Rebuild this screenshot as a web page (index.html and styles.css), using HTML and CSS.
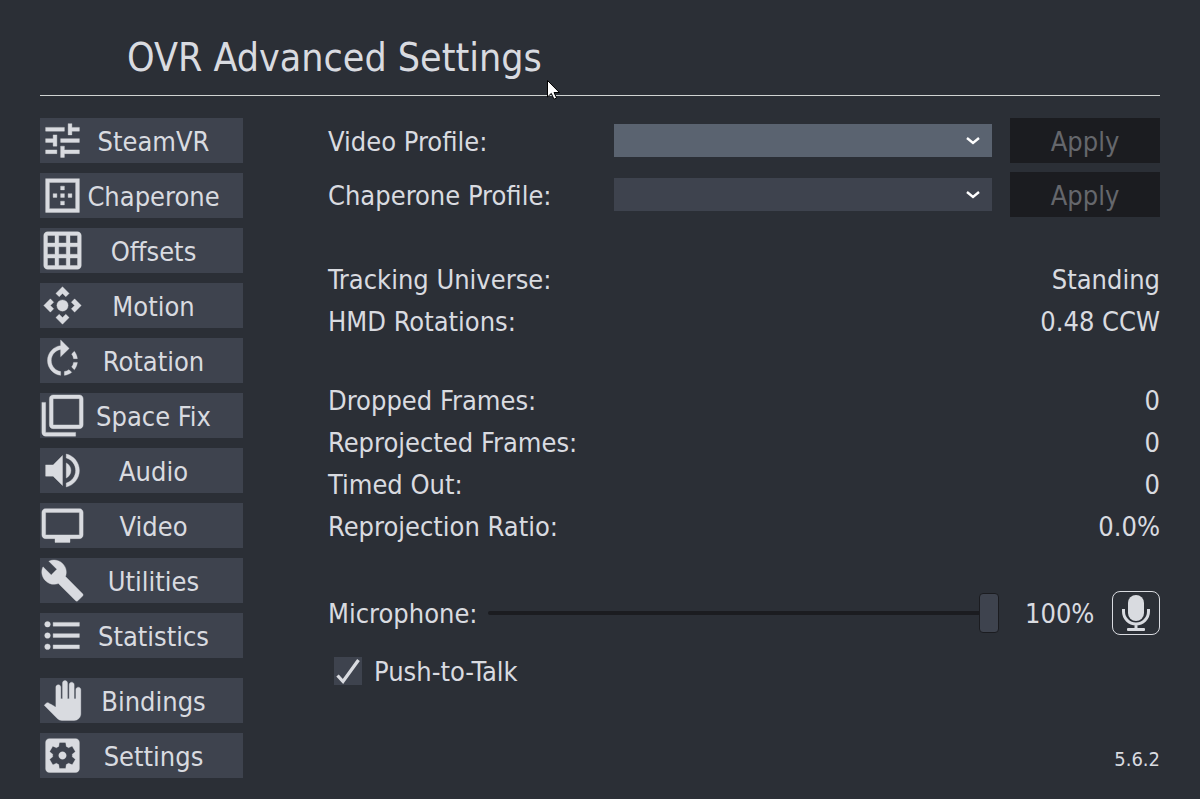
FILE: index.html
```html
<!DOCTYPE html>
<html lang="en">
<head>
<meta charset="utf-8">
<title>OVR Advanced Settings</title>
<link rel="stylesheet" href="styles.css">
</head>
<body>
<div class="page">
  <header class="header">
    <h1 class="title">OVR Advanced Settings</h1>
  </header>
  <div class="body">
    <nav class="nav" aria-label="Sections">
      <button class="nav-button" type="button"><svg class="icon" viewBox="0 0 24 24" aria-hidden="true"><path d="M3 17v2h6v-2H3zM3 5v2h10V5H3zm10 16v-2h8v-2h-8v-2h-2v6h2zM7 9v2H3v2h4v2h2V9H7zm14 4v-2H11v2h10zm-6-4h2V7h4V5h-4V3h-2v6z"/></svg><span class="nav-label">SteamVR</span></button>
      <button class="nav-button" type="button"><svg class="icon" viewBox="0 0 24 24" aria-hidden="true"><path d="M13 7h-2v2h2V7zm0 4h-2v2h2v-2zm4 0h-2v2h2v-2zM3 3v18h18V3H3zm16 16H5V5h14v14zm-6-4h-2v2h2v-2zm-4-4H7v2h2v-2z"/></svg><span class="nav-label">Chaperone</span></button>
      <button class="nav-button" type="button"><svg class="icon" viewBox="0 0 24 24" aria-hidden="true"><path d="M20 2H4c-1.1 0-2 .9-2 2v16c0 1.1.9 2 2 2h16c1.1 0 2-.9 2-2V4c0-1.1-.9-2-2-2zM8 20H4v-4h4v4zm0-6H4v-4h4v4zm0-6H4V4h4v4zm6 12h-4v-4h4v4zm0-6h-4v-4h4v4zm0-6h-4V4h4v4zm6 12h-4v-4h4v4zm0-6h-4v-4h4v4zm0-6h-4V4h4v4z"/></svg><span class="nav-label">Offsets</span></button>
      <button class="nav-button" type="button"><svg class="icon" viewBox="0 0 24 24" aria-hidden="true"><path d="M15.54 5.54L13.77 7.3 12 5.54 10.23 7.3 8.46 5.54 12 2zm2.92 10l-1.76-1.77L18.46 12l-1.76-1.77 1.76-1.77L22 12zm-10 2.92l1.77-1.76L12 18.46l1.77-1.76 1.77 1.76L12 22zm-2.92-10l1.76 1.77L5.54 12l1.76 1.77-1.76 1.77L2 12z"/><circle cx="12" cy="12" r="3"/></svg><span class="nav-label">Motion</span></button>
      <button class="nav-button" type="button"><svg class="icon" viewBox="0 0 24 24" aria-hidden="true"><path d="M15.55 5.55L11 1v3.07C7.06 4.56 4 7.92 4 12s3.05 7.44 7 7.93v-2.02c-2.84-.48-5-2.94-5-5.91s2.16-5.43 5-5.91V10l4.55-4.45zM19.93 11c-.17-1.39-.72-2.73-1.62-3.89l-1.42 1.42c.54.75.88 1.6 1.02 2.47h2.02zM13 17.9v2.02c1.39-.17 2.74-.71 3.9-1.61l-1.44-1.44c-.75.54-1.59.89-2.46 1.03zm3.89-2.42l1.42 1.41c.9-1.16 1.45-2.5 1.62-3.89h-2.02c-.14.87-.48 1.72-1.02 2.48z"/></svg><span class="nav-label">Rotation</span></button>
      <button class="nav-button" type="button"><svg class="icon" viewBox="0 0 24 24" aria-hidden="true"><path d="M3 5H1v16c0 1.1.9 2 2 2h16v-2H3V5zm18-4H7c-1.1 0-2 .9-2 2v14c0 1.1.9 2 2 2h14c1.1 0 2-.9 2-2V3c0-1.1-.9-2-2-2zm0 16H7V3h14v14z"/></svg><span class="nav-label">Space Fix</span></button>
      <button class="nav-button" type="button"><svg class="icon" viewBox="0 0 24 24" aria-hidden="true"><path d="M3 9v6h4l5 5V4L7 9H3zm13.5 3c0-1.77-1.02-3.29-2.5-4.03v8.05c1.48-.73 2.5-2.25 2.5-4.02zM14 3.23v2.06c2.89.86 5 3.54 5 6.71s-2.11 5.85-5 6.71v2.06c4.01-.91 7-4.49 7-8.77s-2.99-7.86-7-8.77z"/></svg><span class="nav-label">Audio</span></button>
      <button class="nav-button" type="button"><svg class="icon" viewBox="0 0 24 24" aria-hidden="true"><path d="M21 3H3c-1.1 0-2 .9-2 2v12c0 1.1.9 2 2 2h5v2h8v-2h5c1.1 0 1.99-.9 1.99-2L23 5c0-1.1-.9-2-2-2zm0 14H3V5h18v12z"/></svg><span class="nav-label">Video</span></button>
      <button class="nav-button" type="button"><svg class="icon" viewBox="0 0 24 24" aria-hidden="true"><path d="M22.7 19l-9.1-9.1c.9-2.3.4-5-1.5-6.9-2-2-5-2.4-7.4-1.3L9 6 6 9 1.6 4.7C.4 7.1.9 10.1 2.9 12.1c1.9 1.9 4.6 2.4 6.9 1.5l9.1 9.1c.4.4 1 .4 1.4 0l2.3-2.3c.5-.4.5-1.1.1-1.4z"/></svg><span class="nav-label">Utilities</span></button>
      <button class="nav-button" type="button"><svg class="icon" viewBox="0 0 24 24" aria-hidden="true"><circle cx="4" cy="6" r="1.5"/><circle cx="4" cy="12" r="1.5"/><circle cx="4" cy="18" r="1.5"/><path d="M7 19h14v-2H7v2zm0-6h14v-2H7v2zm0-8v2h14V5H7z"/></svg><span class="nav-label">Statistics</span></button>
      <button class="nav-button nav-button-split" type="button"><svg class="icon" viewBox="-1.5 -1.5 27 27" aria-hidden="true"><path d="M23 5.5V20c0 2.2-1.8 4-4 4h-7.3c-1.08 0-2.1-.43-2.85-1.19L1 14.83s1.26-1.23 1.3-1.25c.22-.19.49-.29.79-.29.22 0 .42.06.6.16.04.01 4.31 2.46 4.31 2.46V4c0-.83.67-1.5 1.5-1.5S11 3.17 11 4v7h1V1.5c0-.83.67-1.5 1.5-1.5S15 .67 15 1.5V11h1V2.5c0-.83.67-1.5 1.5-1.5s1.5.67 1.5 1.5V11h1V5.5c0-.83.67-1.5 1.5-1.5s1.5.67 1.5 1.5z"/></svg><span class="nav-label">Bindings</span></button>
      <button class="nav-button" type="button"><svg class="icon" viewBox="0 0 24 24" aria-hidden="true"><path d="M12 10c-1.1 0-2 .9-2 2s.9 2 2 2 2-.9 2-2-.9-2-2-2zm7-7H5c-1.11 0-2 .9-2 2v14c0 1.1.89 2 2 2h14c1.11 0 2-.9 2-2V5c0-1.1-.89-2-2-2zm-1.75 9c0 .23-.02.46-.05.68l1.48 1.16c.13.11.17.3.08.45l-1.4 2.42c-.09.15-.27.21-.43.15l-1.74-.7c-.36.28-.76.51-1.18.69l-.26 1.85c-.03.17-.18.3-.35.3h-2.8c-.17 0-.32-.13-.35-.29l-.26-1.85c-.43-.18-.82-.41-1.18-.69l-1.74.7c-.16.06-.34 0-.43-.15l-1.4-2.42c-.09-.15-.05-.34.08-.45l1.48-1.16c-.03-.23-.05-.46-.05-.69 0-.23.02-.46.05-.68l-1.48-1.16c-.13-.11-.17-.3-.08-.45l1.4-2.42c.09-.15.27-.21.43-.15l1.74.7c.36-.28.76-.51 1.18-.69l.26-1.85c.03-.17.18-.3.35-.3h2.8c.17 0 .32.13.35.29l.26 1.85c.43.18.82.41 1.18.69l1.74-.7c.16-.06.34 0 .43.15l1.4 2.42c.09.15.05.34-.08.45l-1.48 1.16c.03.23.05.46.05.69z"/></svg><span class="nav-label">Settings</span></button>
    </nav>
    <main class="main">
      <section class="profiles">
        <div class="profile">
          <label class="row-label" for="video-profile">Video Profile:</label>
          <div class="picker">
            <select class="select select-active" id="video-profile"><option></option></select>
            <svg class="chevron" viewBox="0 0 14 8" aria-hidden="true"><path d="M1 1l6 5 6-5"/></svg>
          </div>
          <button class="apply" type="button" disabled>Apply</button>
        </div>
        <div class="profile">
          <label class="row-label" for="chaperone-profile">Chaperone Profile:</label>
          <div class="picker">
            <select class="select" id="chaperone-profile"><option></option></select>
            <svg class="chevron" viewBox="0 0 14 8" aria-hidden="true"><path d="M1 1l6 5 6-5"/></svg>
          </div>
          <button class="apply" type="button" disabled>Apply</button>
        </div>
      </section>
      <dl class="stats stats-tracking">
        <div class="stat"><dt>Tracking Universe:</dt><dd>Standing</dd></div>
        <div class="stat"><dt>HMD Rotations:</dt><dd>0.48 CCW</dd></div>
      </dl>
      <dl class="stats stats-frames">
        <div class="stat"><dt>Dropped Frames:</dt><dd>0</dd></div>
        <div class="stat"><dt>Reprojected Frames:</dt><dd>0</dd></div>
        <div class="stat"><dt>Timed Out:</dt><dd>0</dd></div>
        <div class="stat"><dt>Reprojection Ratio:</dt><dd>0.0%</dd></div>
      </dl>
      <div class="microphone">
        <label class="row-label" for="mic-volume">Microphone:</label>
        <input class="slider" id="mic-volume" type="range" min="0" max="100" value="100">
        <output class="row-label volume" for="mic-volume">100%</output>
        <button class="mic-button" type="button" aria-label="Toggle microphone">
          <svg class="mic-icon" viewBox="0 0 28 38" aria-hidden="true"><rect x="6" y="1" width="16" height="26" rx="8"/><path class="mic-line" d="M1.500 15v2.500a12.500 12.500 0 0 0 25 0V15M14 30v5"/><rect x="5" y="34" width="18" height="3" rx="1"/></svg>
        </button>
      </div>
      <div class="talk">
        <input class="check" id="push-to-talk" type="checkbox" checked>
        <label class="row-label" for="push-to-talk">Push-to-Talk</label>
      </div>
      <p class="version">5.6.2</p>
    </main>
  </div>
  <svg class="pointer" viewBox="0 0 13 20" aria-hidden="true"><path d="M.5.5v16.500l3.800-3.600 2.700 5.800 2.600-1.200-2.600-5.500h5.400z"/></svg>
</div>
</body>
</html>
```
FILE: styles.css
```css
* {
  box-sizing: border-box;
}

body {
  margin: 0;
  background: #2b2f36;
  color: #d9dbe0;
  font: 27px/42px "DejaVu Sans Condensed", "DejaVu Sans", sans-serif;
  font-stretch: condensed;
}

button,
select,
input {
  margin: 0;
  color: inherit;
  font: inherit;
}

.page {
  position: relative;
  display: flex;
  flex-direction: column;
  min-height: 100vh;
  padding: 20px 40px 21px;
}

.header {
  padding: 14px 87px 13px;
  border-bottom: 1px solid #d0d4d2;
}

.title {
  margin: 0;
  font-size: 39px;
  font-weight: 400;
  line-height: 48px;
}

.body {
  display: flex;
  flex: 1;
  gap: 85px;
  padding-top: 22px;
}

.nav {
  display: flex;
  flex: none;
  flex-direction: column;
  gap: 10px;
  width: 203px;
}

.nav-button {
  display: flex;
  align-items: center;
  height: 45px;
  padding: 0;
  border: 0;
  background: #3e434e;
}

.nav-button-split {
  margin-top: 10px;
}

.nav-label {
  flex: 1;
  padding: 2px 21px 0 0;
  text-align: center;
  white-space: nowrap;
}

.icon {
  flex: none;
  width: 45px;
  height: 45px;
  fill: #d9dbe0;
  stroke: #d9dbe0;
  stroke-width: 0.2;
}

.main {
  display: flex;
  flex: 1;
  flex-direction: column;
  min-width: 0;
}

.profiles {
  display: grid;
  gap: 9px;
}

.profile {
  display: grid;
  grid-template-columns: 268px 1fr 150px;
  gap: 18px;
  align-items: center;
  height: 45px;
}

.row-label {
  padding-top: 2px;
}

.picker {
  display: grid;
  align-items: center;
}

.select {
  grid-area: 1 / 1;
  width: 100%;
  height: 33px;
  padding: 0 40px 0 10px;
  border: 0;
  border-radius: 0;
  background: #3e434e;
  appearance: none;
}

.select-active {
  background: #5a6370;
}

.chevron {
  grid-area: 1 / 1;
  justify-self: end;
  width: 14px;
  height: 8px;
  margin-right: 12px;
  fill: none;
  stroke: #fff;
  stroke-width: 2.4;
  pointer-events: none;
}

.apply {
  height: 45px;
  padding: 2px 0 0;
  border: 0;
  background: #1b1c20;
  color: #65676c;
}

.stats {
  margin: 0;
}

.stats-tracking {
  padding-top: 42px;
}

.stats-frames {
  padding-top: 37px;
}

.stat {
  display: flex;
  justify-content: space-between;
}

.stat dd {
  margin: 0;
}

.microphone {
  display: flex;
  align-items: center;
  height: 44px;
  margin-top: 43px;
}

.slider {
  flex: 1;
  min-width: 0;
  height: 40px;
  margin: 0 26px 0 10px;
  background: none;
  appearance: none;
}

.slider::-webkit-slider-runnable-track {
  height: 4px;
  border-radius: 2px;
  background: #1b1c20;
}

.slider::-webkit-slider-thumb {
  width: 20px;
  height: 40px;
  margin-top: -18px;
  border: 1px solid #1b1c20;
  border-radius: 4px;
  background: #3e434e;
  appearance: none;
}

.volume {
  min-width: 70px;
  margin-right: 17px;
}

.mic-button {
  display: flex;
  flex: none;
  align-items: center;
  justify-content: center;
  width: 48px;
  height: 44px;
  padding: 0;
  border: 1px solid #d9dbe0;
  border-radius: 8px;
  background: none;
}

.mic-icon {
  width: 28px;
  height: 38px;
  fill: #d9dbe0;
}

.mic-line {
  fill: none;
  stroke: #d9dbe0;
  stroke-width: 3;
}

.talk {
  display: flex;
  gap: 12px;
  align-items: center;
  height: 28px;
  margin-top: 22px;
  padding-left: 6px;
}

.check {
  width: 28px;
  height: 28px;
  background: #3e434e url("data:image/svg+xml,%3Csvg xmlns='http://www.w3.org/2000/svg' viewBox='0 0 28 28'%3E%3Cpath d='M3.500 18.500l5.500 6L24.500 3' fill='none' stroke='%23d9dbe0' stroke-width='3.300'/%3E%3C/svg%3E");
  appearance: none;
}

.version {
  margin: auto 0 0;
  font-size: 20px;
  line-height: 38px;
  text-align: right;
}

.pointer {
  position: absolute;
  top: 80px;
  left: 547px;
  width: 13px;
  height: 20px;
  fill: #fff;
  stroke: #000;
}
```
